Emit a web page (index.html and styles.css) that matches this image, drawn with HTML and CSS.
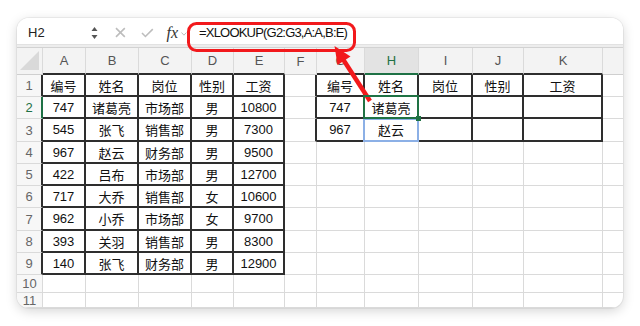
FILE: index.html
```html
<!doctype html>
<html>
<head>
  <title>XLOOKUP</title>
  <link rel="stylesheet" href="styles.css">
</head>
<body>
  <div class="page">
    <div class="sheet">
      <div class="toolbar">
        <div class="namebox">
          <span class="cellname">H2</span>
          <svg class="spin" width="7" height="14" viewBox="0 0 7 14"><path d="M3.5 1 L6.5 5 L0.5 5 Z" fill="#555"/><path d="M3.5 13 L6.5 9 L0.5 9 Z" fill="#555"/></svg>
        </div>
        <div class="tools">
          <svg class="cancel" width="11" height="11" viewBox="0 0 11 11"><path d="M1 1 L10 10 M10 1 L1 10" stroke="#bdbdbd" stroke-width="1.6"/></svg>
          <svg class="ok" width="13" height="10" viewBox="0 0 13 10"><path d="M1 5 L4.5 8.5 L12 1" fill="none" stroke="#bdbdbd" stroke-width="1.6"/></svg>
          <span class="fx">fx</span>
          <svg class="more" width="6" height="4" viewBox="0 0 6 4"><path d="M0.5 0.5 L3 3.2 L5.5 0.5" fill="none" stroke="#bbb" stroke-width="1"/></svg>
        </div>
        <div class="formula">=XLOOKUP(G2:G3,A:A,B:E)</div>
      </div>
      <div class="band"></div>
      <div id="grid" class="grid"></div>
    </div>
  </div>

  <!-- red callout drawn over the sheet -->
  <svg class="callout" width="640" height="326" viewBox="0 0 640 326">
    <rect x="188.5" y="23.5" width="166" height="27" rx="8" fill="none" stroke="#f2191c" stroke-width="3"/>
    <line x1="370" y1="101" x2="343.5" y2="60" stroke="#f2191c" stroke-width="4.5"/>
    <polygon points="334.5,46 350.5,56.5 337.5,65" fill="#f2191c"/>
  </svg>

  <script type="text/javascript">
    var letters = ['A','B','C','D','E','F','G','H','I','J','K',''];
    var data = [
      ['编号','姓名','岗位','性别','工资','','编号','姓名','岗位','性别','工资',''],
      ['747','诸葛亮','市场部','男','10800','','747','诸葛亮','','','',''],
      ['545','张飞','销售部','男','7300','','967','赵云','','','',''],
      ['967','赵云','财务部','男','9500','','','','','','',''],
      ['422','吕布','市场部','男','12700','','','','','','',''],
      ['717','大乔','销售部','女','10600','','','','','','',''],
      ['962','小乔','市场部','女','9700','','','','','','',''],
      ['393','关羽','销售部','男','8300','','','','','','',''],
      ['140','张飞','财务部','男','12900','','','','','','',''],
      ['','','','','','','','','','','',''],
      ['','','','','','','','','','','','']
    ];
    // cells that belong to one of the two bordered tables
    function boxed(r, c){
      if(r >= 1 && r <= 9 && c >= 1 && c <= 5) return true;
      if(r >= 1 && r <= 3 && c >= 7 && c <= 11) return true;
      return false;
    }
    var html = "";
    for(var r = 0; r <= 11; r++){
      for(var c = 0; c <= 12; c++){
        var cls = "cell";
        var text = "";
        if(r == 0 && c == 0){
          cls += " corner";
          text = "<span class='tri'></span>";
        } else if(r == 0){
          cls += " hd";
          text = letters[c - 1];
          if(c == 8) cls += " csel";
        } else if(c == 0){
          cls += " rh";
          text = r;
          if(r == 2) cls += " rsel";
        } else {
          text = data[r - 1][c - 1];
          if(r == 2 && c == 8) cls += " sel";
          if(r == 3 && c == 8) cls += " ref";
        }
        if(boxed(r, c) || boxed(r, c + 1)) cls += " br";
        if(boxed(r, c) || boxed(r + 1, c)) cls += " bb";
        if(c == 12) cls += " last";
        html = html + "<div class='" + cls + "'>" + text + "</div>";
      }
    }
    document.getElementById('grid').innerHTML = html;
  </script>
</body>
</html>
```

FILE: styles.css
```css
body{
  margin: 0;
  background: #fff;
  font-family: "Liberation Sans", "Noto Sans CJK SC", sans-serif;
  position: relative;
}
.page{
  padding: 18px 17px;
}
.sheet{
  width: 606px;
  height: 290px;
  border-radius: 12px;
  overflow: hidden;
  background: #fff;
  box-shadow: 0 3px 12px rgba(0,0,0,.17), 0 0 0 1px rgba(0,0,0,.05);
  display: flex;
  flex-direction: column;
}

/* formula bar */
.toolbar{
  height: 26px;
  flex: none;
  box-sizing: border-box;
  padding-top: 3px;
  display: flex;
  align-items: center;
  background: #fff;
}
.namebox{
  width: 83px;
  height: 100%;
  display: flex;
  align-items: center;
  box-sizing: border-box;
  padding: 0 2px 0 11px;
}
.cellname{
  flex: 1;
  font-size: 13px;
  color: #222;
}
.tools{
  width: 87px;
  height: 100%;
  display: flex;
  align-items: center;
}
.cancel{
  margin-left: 15px;
}
.ok{
  margin-left: 15px;
}
.fx{
  margin-left: 13px;
  font-family: "Liberation Serif", serif;
  font-style: italic;
  font-size: 16px;
  color: #333;
}
.more{
  margin-left: 3px;
  margin-top: 2px;
}
.formula{
  flex: 1;
  padding-left: 12px;
  font-size: 13px;
  letter-spacing: -0.8px;
  color: #111;
}
.band{
  height: 4px;
  flex: none;
  box-sizing: border-box;
  background: #ededed;
  border-top: 1px solid #e2e2e2;
  border-bottom: 1px solid #d2d2d2;
}

/* sheet grid */
.grid{
  display: grid;
  grid-template-columns: 26px 43px 53px 53px 42px 51px 32px 48px 54px 54px 51px 79px 20px;
  grid-template-rows: 27px 22px 22px 23px 22px 22px 22px 23px 22px 22px 18px 15px;
}
.cell{
  box-sizing: border-box;
  border-right: 1px solid #dadada;
  border-bottom: 1px solid #dadada;
  display: flex;
  align-items: center;
  justify-content: center;
  font-size: 13px;
  color: #111;
  white-space: nowrap;
}
.hd{
  background: #f3f3f3;
  color: #555;
  border-bottom-color: #cfcfcf;
}
.rh{
  background: #f7f7f7;
  color: #666;
}
.corner{
  background: #f3f3f3;
  border-bottom-color: #cfcfcf;
  position: relative;
}
.tri{
  position: absolute;
  right: 3px;
  bottom: 4px;
  width: 0;
  height: 0;
  border-left: 19px solid transparent;
  border-bottom: 19px solid #d9d9d9;
}
.br{
  border-right: 2px solid #2e2e2e;
}
.bb{
  border-bottom: 2px solid #2e2e2e;
}
.last{
  border-right: none;
}
.csel{
  background: #e3e3e3;
  color: #1e7145;
  border-bottom: 2px solid #1e7145;
}
.rsel{
  color: #1e7145;
  border-right-color: #1e7145;
}
.sel{
  position: relative;
  z-index: 2;
}
.sel::after{
  content: '';
  position: absolute;
  left: -2px;
  top: -2px;
  right: -2px;
  bottom: -2px;
  border: 2px solid #1f7244;
}
.sel::before{
  content: '';
  position: absolute;
  right: -4px;
  bottom: -4px;
  width: 5px;
  height: 5px;
  background: #1f7244;
  z-index: 3;
}
.ref{
  position: relative;
}
.ref::after{
  content: '';
  position: absolute;
  left: -2px;
  top: -1px;
  right: -2px;
  bottom: -2px;
  border: 2px solid #8cb0e6;
}

.callout{
  position: absolute;
  left: 0;
  top: 0;
  pointer-events: none;
}
```
